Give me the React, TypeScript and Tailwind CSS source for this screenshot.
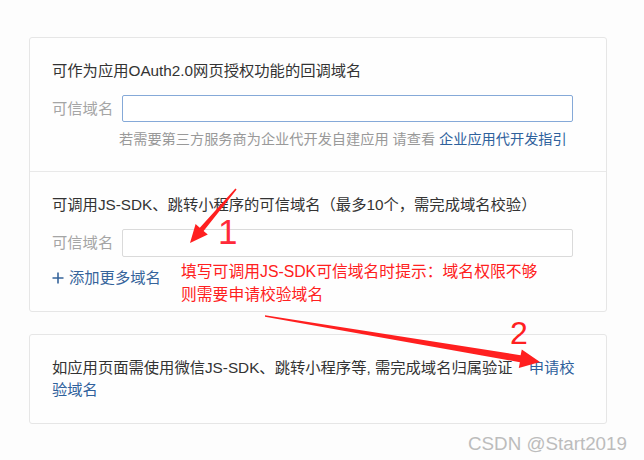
import React from 'react';

const font = "font-['Liberation_Sans','Noto_Sans_CJK_SC',sans-serif]";

const Annotations: React.FC = () => (
  <>
    <svg className="absolute inset-0 pointer-events-none" width={644} height={460}>
      <polygon
        fill="#ff1f1f"
        points="236.6,189.4 203.6,230.9 207.8,234.5 190,243 195.6,224.1 199.8,227.7 235.4,188.6"
      />
      <polygon
        fill="#ff1f1f"
        points="265,315.3 520.6,355.2 521.8,349.4 540,362 518.8,368 519.9,362.2 265,316.7"
      />
    </svg>
    <span className="absolute left-[218px] top-[214px] text-[35px] leading-[35px] text-[#ff2a3a] font-['Liberation_Sans',sans-serif]">
      1
    </span>
    <span className="absolute left-[510px] top-[317px] text-[32px] leading-[32px] text-[#ff2020] font-['Liberation_Sans',sans-serif]">
      2
    </span>
    <div className="absolute left-[181px] top-[260px] text-[15.8px] leading-[23px] text-[#ff2020]">
      <div>填写可调用JS-SDK可信域名时提示：域名权限不够</div>
      <div>则需要申请校验域名</div>
    </div>
    <span className="absolute left-[468px] top-[433px] text-[18.8px] leading-[22px] text-[#bcbcbc] font-['Liberation_Sans',sans-serif]">
      CSDN @Start2019
    </span>
  </>
);

export default function App() {
  return (
    <div className={`relative w-[644px] h-[460px] overflow-hidden bg-[#fdfdfd] pt-[37px] pl-[29px] ${font}`}>
      <div className="w-[578px] border border-[#e6e6e6] rounded-[3px] bg-[#fefefe]">
        <div className="pt-[22px] pb-[22px] pl-[22px] pr-[33px] border-b border-[#e9e9e9]">
          <div className="text-[15.3px] leading-[22px] text-[#333]">可作为应用OAuth2.0网页授权功能的回调域名</div>
          <div className="mt-[13px] flex items-center gap-[9px]">
            <span className="w-[61px] text-[15.3px] leading-[22px] text-[#a5a5a5] whitespace-nowrap">可信域名</span>
            <div className="flex-1 h-[27px] border border-[#85a9d8] rounded-[2px] bg-white" />
          </div>
          <div className="mt-[7px] pl-[67px] text-[14.2px] leading-[20px] text-[#999]">
            若需要第三方服务商为企业代开发自建应用 请查看 <span className="text-[#2f619c]">企业应用代开发指引</span>
          </div>
        </div>
        <div className="pt-[22px] pb-[22px] pl-[22px] pr-[33px]">
          <div className="text-[15.3px] leading-[22px] text-[#333]">
            可调用JS-SDK、跳转小程序的可信域名（最多10个，需完成域名校验）
          </div>
          <div className="mt-[13px] flex items-center gap-[9px]">
            <span className="w-[61px] text-[15.3px] leading-[22px] text-[#a5a5a5] whitespace-nowrap">可信域名</span>
            <div className="flex-1 h-[28px] border border-[#dadada] rounded-[2px] bg-white" />
          </div>
          <div className="mt-[10px] flex items-center gap-[5px] text-[15.3px] leading-[22px] text-[#36649b]">
            <svg width="12" height="12" viewBox="0 0 12 12">
              <path d="M6 0.5V11.5M0.5 6H11.5" stroke="#36649b" strokeWidth="1.6" />
            </svg>
            <span>添加更多域名</span>
          </div>
        </div>
      </div>

      <div className="mt-[22px] w-[578px] border border-[#e6e6e6] rounded-[3px] bg-[#fefefe] pt-[22px] pb-[22px] pl-[22px] pr-[33px]">
        <p className="text-[15.3px] leading-[22px] text-[#333] whitespace-nowrap">
          如应用页面需使用微信JS-SDK、跳转小程序等, 需完成域名归属验证
          <span className="ml-[16px] text-[#2f619c]">
            申请校
            <br />
            验域名
          </span>
        </p>
      </div>

      <Annotations />
    </div>
  );
}
